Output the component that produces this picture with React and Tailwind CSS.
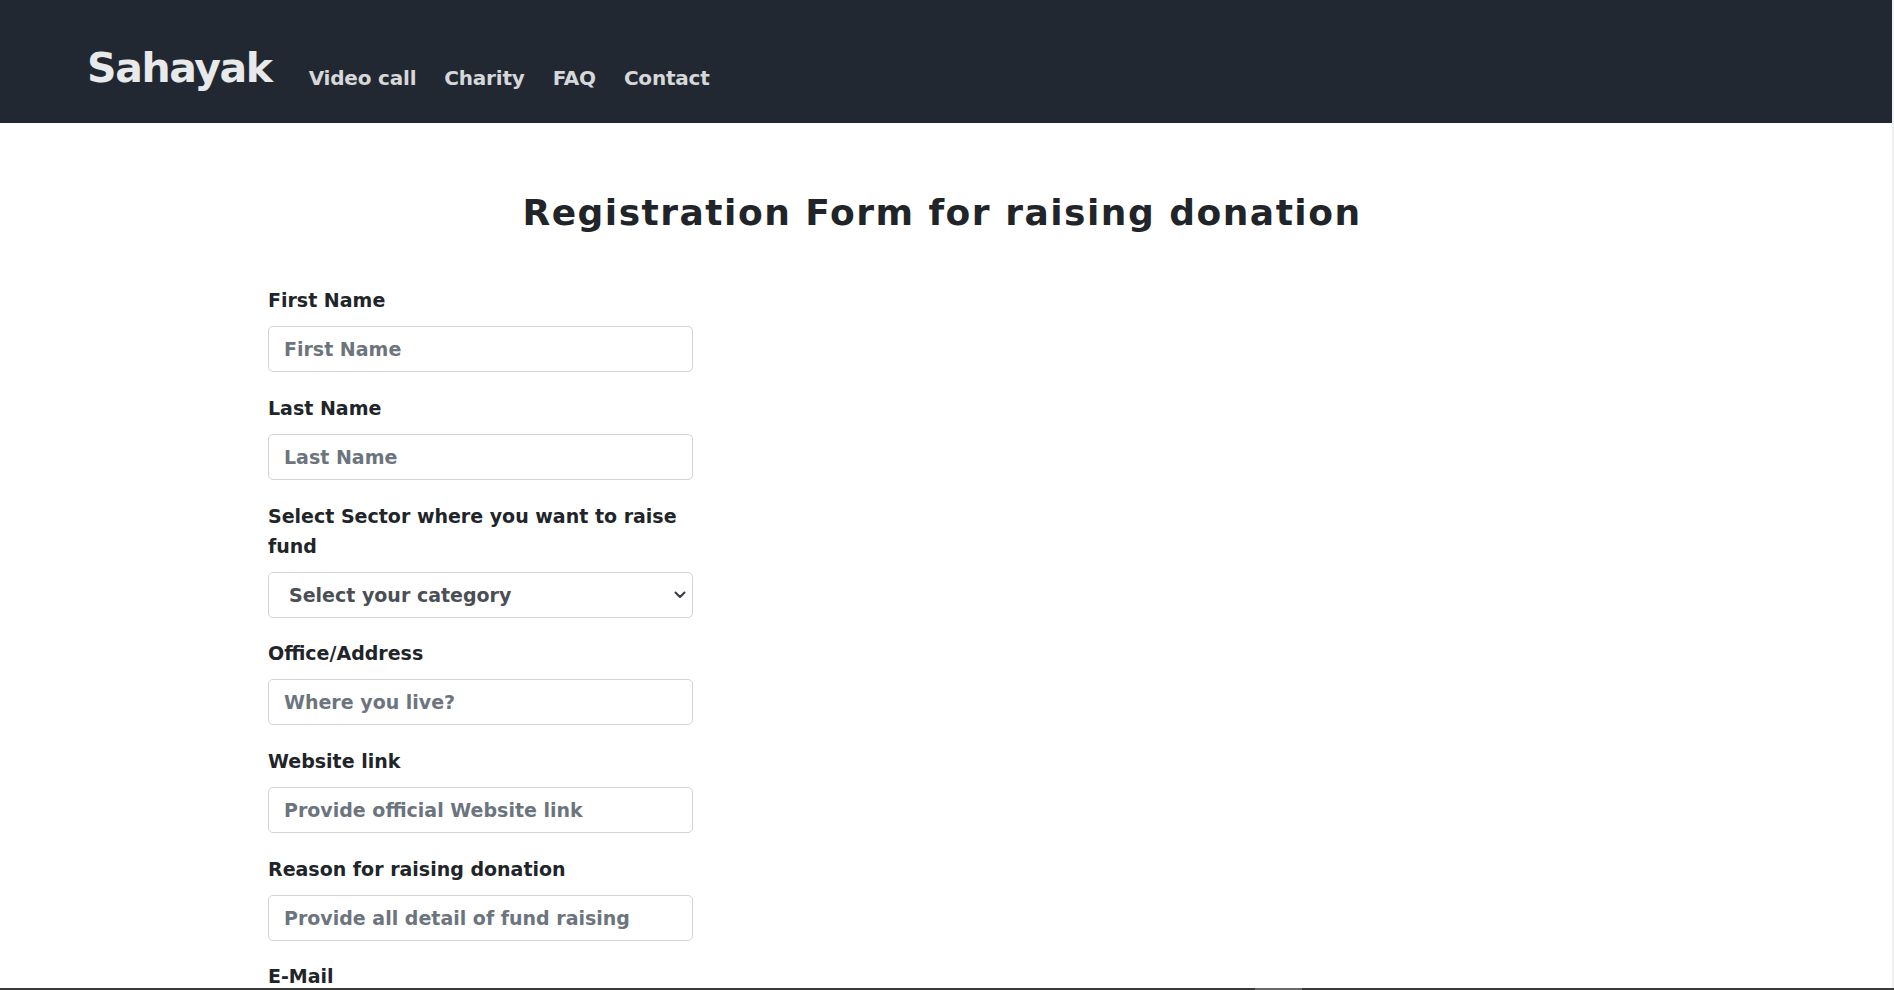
import React from "react";

function Field({ label, placeholder, className = "" }) {
  return (
    <div className={"w-[425px] " + className}>
      <label className="block text-[19px] leading-[30px] font-bold text-[#212529] mb-[11px]">
        {label}
      </label>
      <input
        type="text"
        placeholder={placeholder}
        className="block w-full h-[46px] border border-[#ced4da] rounded-[5px] pl-[15px] text-[19px] font-bold text-[#212529] placeholder:text-[#6c757d] outline-none bg-white"
      />
    </div>
  );
}

export default function App() {
  return (
    <div className="flex flex-col w-[1894px] h-[990px] overflow-hidden bg-white font-['DejaVu_Sans',sans-serif]">
      <div className="flex h-[988px]">
        <div className="w-[1892px] overflow-hidden">
          <nav className="h-[123px] bg-[#222831] flex items-start pl-[87px]">
            <a className="mt-[48px] text-[41px] leading-none font-bold tracking-[-1.4px] text-[#e8e9eb]">
              Sahayak
            </a>
            <ul className="flex items-start mt-[68px] ml-[37px] gap-[28px] text-[20px] leading-none font-bold tracking-[-0.2px] text-[#d6d7d9]">
              <li>Video call</li>
              <li>Charity</li>
              <li>FAQ</li>
              <li>Contact</li>
            </ul>
          </nav>
          <main className="pt-[72px]">
            <h1 className="text-center pr-[8px] text-[36px] leading-none font-bold tracking-[1.5px] text-[#212529]">
              Registration Form for raising donation
            </h1>
            <form className="pl-[268px] pt-[54px] flex flex-col">
              <Field label="First Name" placeholder="First Name" className="mb-[21px]" />
              <Field label="Last Name" placeholder="Last Name" className="mb-[21px]" />
              <div className="w-[425px] mb-[20px]">
                <label className="block text-[19px] leading-[30px] font-bold text-[#212529] mb-[11px]">
                  Select Sector where you want to raise fund
                </label>
                <div className="relative">
                  <select className="block w-full h-[46px] border border-[#ced4da] rounded-[5px] pl-[20px] text-[19px] font-bold text-[#4a4f55] appearance-none bg-white outline-none">
                    <option>Select your category</option>
                    <option>Education</option>
                    <option>Health</option>
                    <option>Disaster relief</option>
                  </select>
                  <svg
                    className="absolute right-[7px] top-[19px] pointer-events-none"
                    width="12"
                    height="8"
                    viewBox="0 0 12 8"
                    fill="none"
                  >
                    <path d="M1.5 1.5L6 6L10.5 1.5" stroke="#343a40" strokeWidth="2" strokeLinecap="round" strokeLinejoin="round" />
                  </svg>
                </div>
              </div>
              <Field label="Office/Address" placeholder="Where you live?" className="mb-[21px]" />
              <Field label="Website link" placeholder="Provide official Website link" className="mb-[21px]" />
              <Field label="Reason for raising donation" placeholder="Provide all detail of fund raising" className="mb-[20px]" />
              <Field label="E-Mail" placeholder="Enter your E-Mail" className="mb-[20px]" />
            </form>
          </main>
        </div>
        <div className="w-[2px] bg-[#f0f0f0]" />
      </div>
      <div className="h-[2px] bg-[#3a3a3a] flex">
        <div className="ml-[1255px] w-[47px] bg-[#6a6a6a]" />
      </div>
    </div>
  );
}
